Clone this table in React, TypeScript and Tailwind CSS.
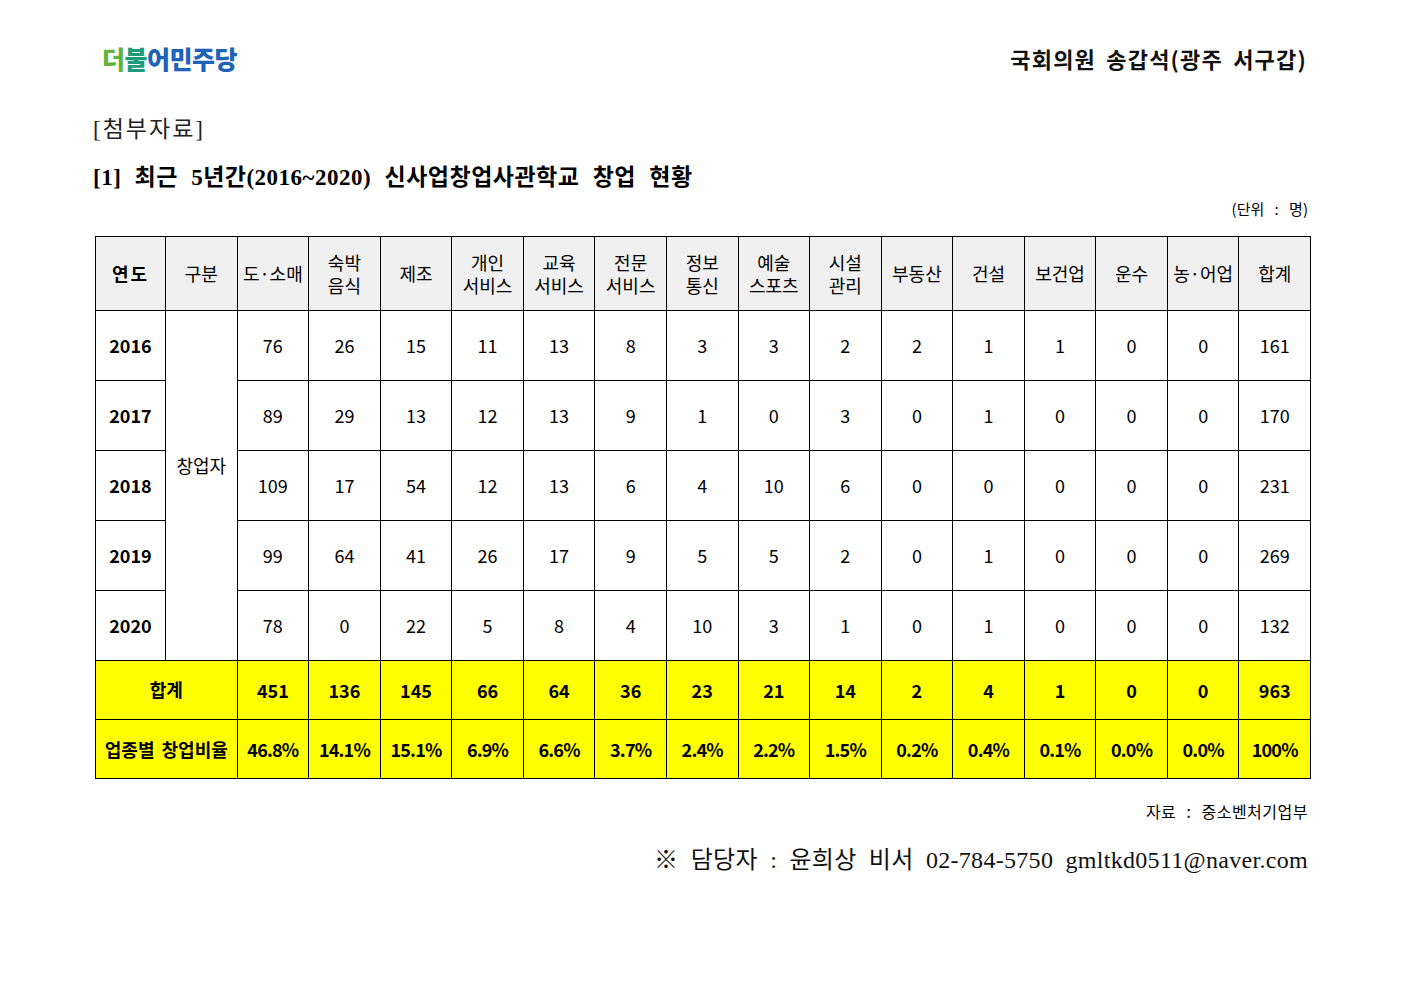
import React from 'react';

const headers: string[][] = [
  ['도·소매'],
  ['숙박', '음식'],
  ['제조'],
  ['개인', '서비스'],
  ['교육', '서비스'],
  ['전문', '서비스'],
  ['정보', '통신'],
  ['예술', '스포츠'],
  ['시설', '관리'],
  ['부동산'],
  ['건설'],
  ['보건업'],
  ['운수'],
  ['농·어업'],
  ['합계'],
];

const rows: { year: string; values: number[] }[] = [
  { year: '2016', values: [76, 26, 15, 11, 13, 8, 3, 3, 2, 2, 1, 1, 0, 0, 161] },
  { year: '2017', values: [89, 29, 13, 12, 13, 9, 1, 0, 3, 0, 1, 0, 0, 0, 170] },
  { year: '2018', values: [109, 17, 54, 12, 13, 6, 4, 10, 6, 0, 0, 0, 0, 0, 231] },
  { year: '2019', values: [99, 64, 41, 26, 17, 9, 5, 5, 2, 0, 1, 0, 0, 0, 269] },
  { year: '2020', values: [78, 0, 22, 5, 8, 4, 10, 3, 1, 0, 1, 0, 0, 0, 132] },
];

const totals = [451, 136, 145, 66, 64, 36, 23, 21, 14, 2, 4, 1, 0, 0, 963];
const ratios = ['46.8%', '14.1%', '15.1%', '6.9%', '6.6%', '3.7%', '2.4%', '2.2%', '1.5%', '0.2%', '0.4%', '0.1%', '0.0%', '0.0%', '100%'];

const sans = "font-['Noto_Sans_CJK_KR',sans-serif]";
const serif = "font-['Liberation_Serif','Noto_Sans_CJK_KR',serif]";

const cell = 'border border-black text-center align-middle p-0';

export default function App() {
  return (
    <div className="w-[1403px] h-[992px] bg-white text-black">
      <div className="w-[1216px] ml-[95px] pt-[40px]">
        {/* top bar */}
        <div className="flex items-center justify-between h-[36px]">
          <div className={`${sans} ml-[7px] text-[25px] font-black tracking-[-0.5px] leading-none`}>
            <span className="text-[#5fb33a]">더</span>
            <span className="text-[#1f9a7a]">불</span>
            <span className="text-[#1d63b8]">어민주당</span>
          </div>
          <div className={`${sans} mr-[4px] text-[22px] font-bold tracking-[1.2px] [word-spacing:4px] text-[#111]`}>
            국회의원 송갑석(광주 서구갑)
          </div>
        </div>

        <div className={`${serif} mt-[39px] -ml-[2px] text-[23px] leading-[30px] tracking-[2px] text-[#222]`}>[첨부자료]</div>
        <div className={`${serif} mt-[18px] -ml-[2px] text-[23px] leading-[30px] font-bold tracking-[0.5px] [word-spacing:7px]`}>
          [1] 최근 5년간(2016~2020) 신사업창업사관학교 창업 현황
        </div>
        <div className={`${sans} mt-[6px] text-right pr-[3px] text-[15px] leading-[20px] [word-spacing:7px]`}>(단위 : 명)</div>

        {/* table */}
        <table className={`${sans} mt-[17px] w-[1216px] table-fixed border-collapse text-[18px]`}>
          <colgroup>
            <col className="w-[70px]" />
            {Array.from({ length: 16 }).map((_, i) => (
              <col key={i} />
            ))}
          </colgroup>
          <thead>
            <tr className="h-[74px] bg-[#f0f0f0]">
              <th className={`${cell} font-bold tracking-[2px]`}>연도</th>
              <th className={`${cell} font-normal`}>구분</th>
              {headers.map((h, i) => (
                <th key={i} className={`${cell} font-normal leading-[23px]`}>
                  {h.map((l) => (
                    <div key={l}>{l}</div>
                  ))}
                </th>
              ))}
            </tr>
          </thead>
          <tbody>
            {rows.map((r, ri) => (
              <tr key={r.year} className="h-[70px]">
                <td className={`${cell} font-bold`}>{r.year}</td>
                {ri === 0 && (
                  <td rowSpan={5} className={`${cell} pb-[40px]`}>
                    창업자
                  </td>
                )}
                {r.values.map((v, i) => (
                  <td key={i} className={cell}>
                    {v}
                  </td>
                ))}
              </tr>
            ))}
            <tr className="h-[59px] bg-[#ffff00] font-bold">
              <td colSpan={2} className={`${cell} pb-[2px]`}>
                합계
              </td>
              {totals.map((v, i) => (
                <td key={i} className={cell}>
                  {v}
                </td>
              ))}
            </tr>
            <tr className="h-[59px] bg-[#ffff00] font-bold">
              <td colSpan={2} className={`${cell} [word-spacing:3px]`}>
                업종별 창업비율
              </td>
              {ratios.map((v, i) => (
                <td key={i} className={`${cell} tracking-[-0.8px]`}>
                  {v}
                </td>
              ))}
            </tr>
          </tbody>
        </table>

        <div className={`${sans} mt-[20px] text-right pr-[3px] text-[16px] leading-[24px] tracking-[0.5px] [word-spacing:6px]`}>자료 : 중소벤처기업부</div>
        <div className={`${serif} mt-[22px] text-right pr-[3px] text-[24px] leading-[30px] tracking-[0.3px] [word-spacing:6px] text-[#111]`}>
          ※ 담당자 : 윤희상 비서 02-784-5750 gmltkd0511@naver.com
        </div>
      </div>
    </div>
  );
}
